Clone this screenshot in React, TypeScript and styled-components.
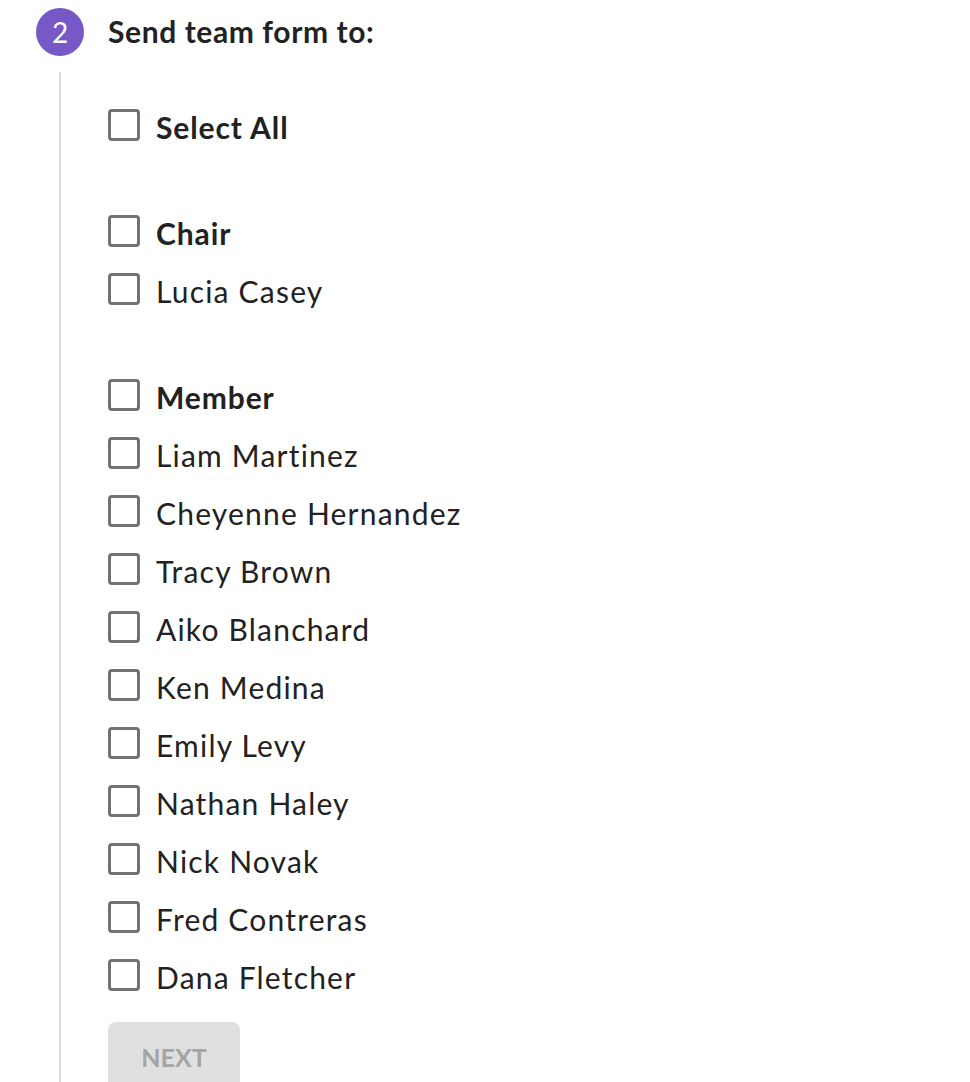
import * as React from "react";
import styled, { createGlobalStyle } from "styled-components";

const GlobalStyle = createGlobalStyle`
  html, body {
    margin: 0;
    padding: 0;
    background: #ffffff;
  }
  body {
    font-family: Lato, "Open Sans", sans-serif;
    color: #222222;
  }
`;

type Person = { name: string; bold?: boolean };

const groups: Person[][] = [
  [{ name: "Select All", bold: true }],
  [{ name: "Chair", bold: true }, { name: "Lucia Casey" }],
  [
    { name: "Member", bold: true },
    { name: "Liam Martinez" },
    { name: "Cheyenne Hernandez" },
    { name: "Tracy Brown" },
    { name: "Aiko Blanchard" },
    { name: "Ken Medina" },
    { name: "Emily Levy" },
    { name: "Nathan Haley" },
    { name: "Nick Novak" },
    { name: "Fred Contreras" },
    { name: "Dana Fletcher" },
  ],
];

const App: React.FC = () => {
  const [checked, setChecked] = React.useState<Record<string, boolean>>({});

  return (
    <>
      <GlobalStyle />
      <Step>
        <StepHeader>
          <StepNumber>2</StepNumber>
          <StepTitle>Send team form to:</StepTitle>
        </StepHeader>
        <StepBody>
          {groups.map((group, i) => (
            <Group key={i}>
              {group.map((p) => (
                <Row key={p.name}>
                  <Box
                    type="checkbox"
                    checked={!!checked[p.name]}
                    onChange={() =>
                      setChecked((c) => ({ ...c, [p.name]: !c[p.name] }))
                    }
                  />
                  <Label $bold={p.bold}>{p.name}</Label>
                </Row>
              ))}
            </Group>
          ))}
          <NextButton disabled>NEXT</NextButton>
        </StepBody>
      </Step>
    </>
  );
};

export default App;

const Step = styled.div`
  padding: 8px 0 0 36px;
  height: 1082px;
  box-sizing: border-box;
  overflow: hidden;
  display: flex;
  flex-direction: column;
`;

const StepHeader = styled.div`
  display: flex;
  align-items: center;
  gap: 24px;
  height: 48px;
`;

const StepNumber = styled.div`
  width: 48px;
  height: 48px;
  border-radius: 50%;
  background: #7658c6;
  color: #ffffff;
  font-size: 28px;
  display: flex;
  align-items: center;
  justify-content: center;
`;

const StepTitle = styled.h2`
  margin: 0 0 2px;
  font-size: 30px;
  font-weight: 700;
  letter-spacing: 0.6px;
  color: #222222;
`;

const StepBody = styled.div`
  margin: 16px 0 0 23px;
  padding: 24px 0 0 47px;
  border-left: 2px solid #dddddd;
  flex: 1;
  display: flex;
  flex-direction: column;
  gap: 48px;
`;

const Group = styled.div`
  display: flex;
  flex-direction: column;
`;

const Row = styled.label`
  display: flex;
  align-items: center;
  gap: 16px;
  height: 58px;
  cursor: pointer;
`;

const Box = styled.input`
  appearance: none;
  margin: 0;
  width: 32px;
  height: 32px;
  box-sizing: border-box;
  border: 3px solid #727272;
  border-radius: 4px;
  background: #ffffff;
  cursor: pointer;

  &:checked {
    background: #7658c6;
    border-color: #7658c6;
  }
`;

const Label = styled.span<{ $bold?: boolean }>`
  font-size: 30px;
  font-weight: ${(p) => (p.$bold ? 700 : 400)};
  letter-spacing: ${(p) => (p.$bold ? "0.9px" : "1.2px")};
  color: #222222;
  padding-top: 3px;
`;

const NextButton = styled.button`
  margin-top: -30px;
  align-self: flex-start;
  width: 132px;
  height: 72px;
  border: none;
  border-radius: 8px;
  background: #e0e0e0;
  color: #a5a5a5;
  font-family: Lato, "Open Sans", sans-serif;
  font-size: 25px;
  font-weight: 700;
  padding: 0 0 2px;
`;
